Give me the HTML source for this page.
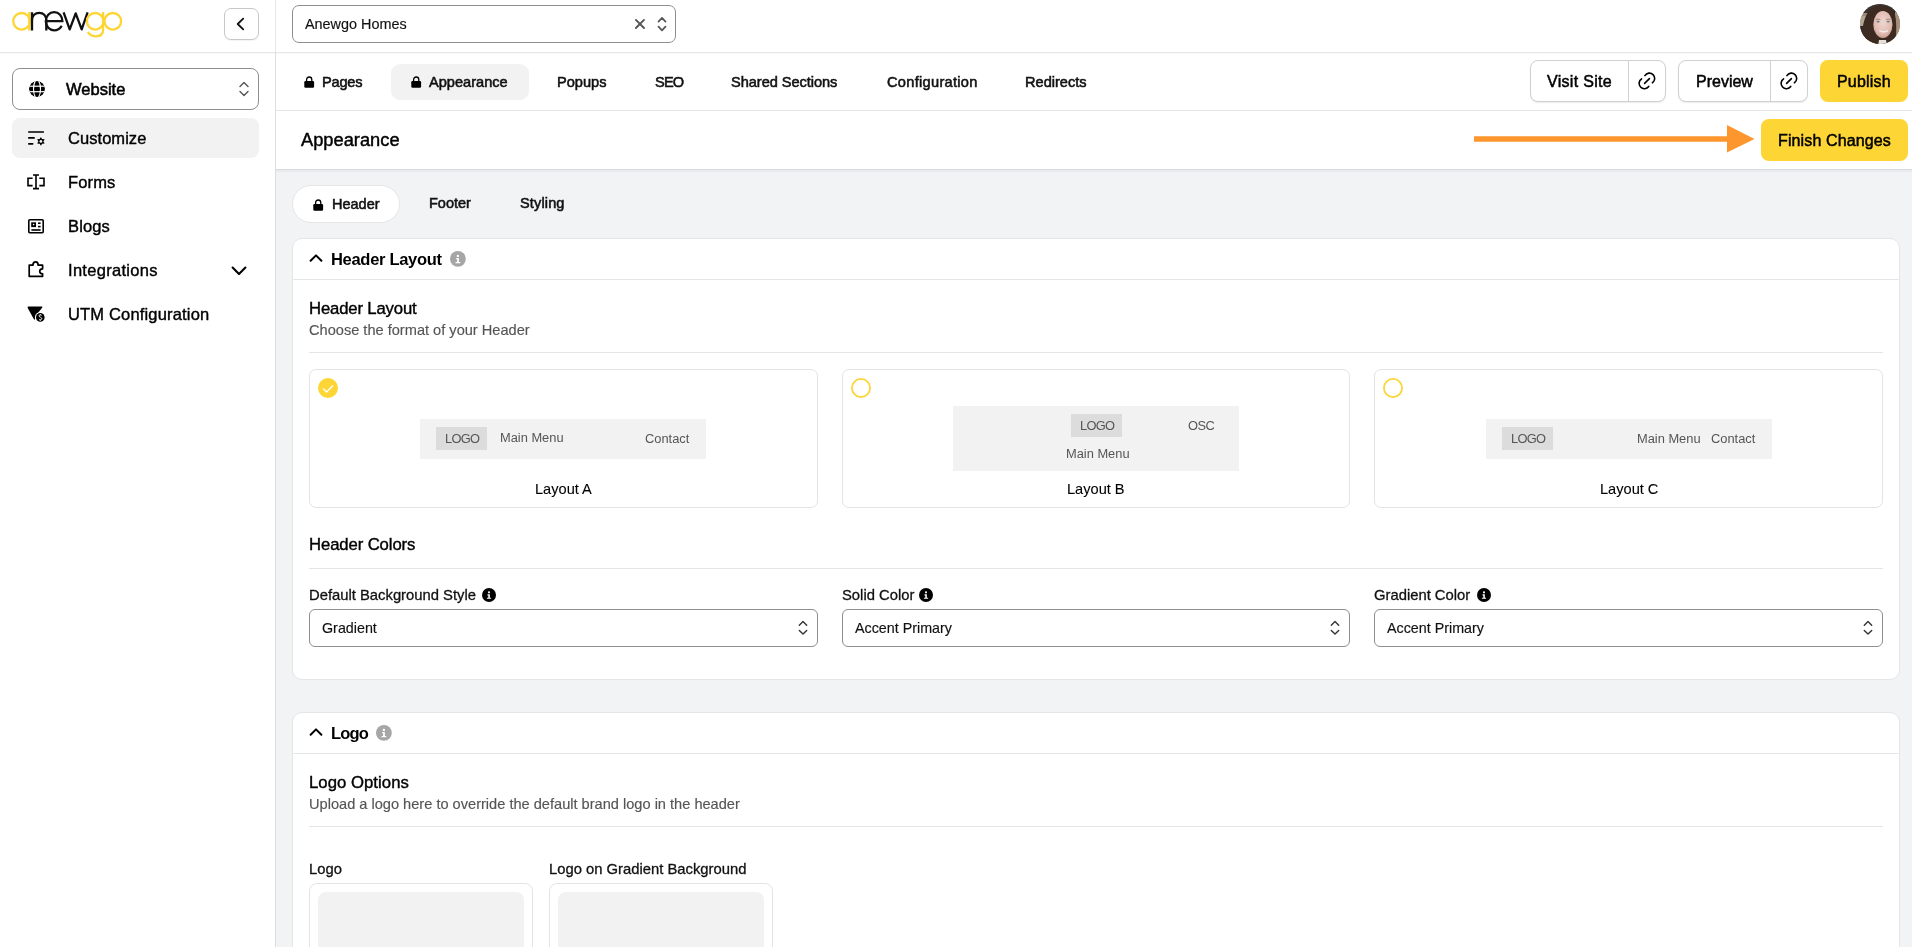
<!DOCTYPE html>
<html><head><meta charset="utf-8"><title>Appearance</title>
<style>
html,body{margin:0;padding:0;}
body{width:1912px;height:947px;overflow:hidden;position:relative;background:#fff;font-family:"Liberation Sans", sans-serif;}
.t{position:absolute;white-space:nowrap;line-height:1;will-change:transform;}
svg{display:block}
</style></head><body>
<div style="position:absolute;left:276px;top:170px;width:1636px;height:777px;box-sizing:border-box;background:#f2f3f5"></div>
<div style="position:absolute;left:276px;top:169px;width:1636px;height:1px;box-sizing:border-box;background:#dadbde"></div>
<div style="position:absolute;left:276px;top:170px;width:1636px;height:3px;box-sizing:border-box;background:linear-gradient(#e6e7ea,#f2f3f5)"></div>
<div style="position:absolute;left:0px;top:52px;width:1912px;height:1px;box-sizing:border-box;background:#e5e5e5"></div>
<div style="position:absolute;left:0px;top:53px;width:1912px;height:2px;box-sizing:border-box;background:linear-gradient(rgba(0,0,0,0.03),rgba(0,0,0,0))"></div>
<div style="position:absolute;left:276px;top:110px;width:1636px;height:1px;box-sizing:border-box;background:#e5e5e5"></div>
<div style="position:absolute;left:275px;top:0px;width:1px;height:52px;box-sizing:border-box;background:#e8e8e8"></div>
<div style="position:absolute;left:275px;top:52px;width:1px;height:895px;box-sizing:border-box;background:#dedede"></div>
<svg style="position:absolute;left:0px;top:0px;overflow:visible;" width="130" height="45" viewBox="0 0 130 45">
<g fill="none" stroke-width="2.3">
<circle cx="21.6" cy="21.3" r="8.3" stroke="#FDD535"/>
<line x1="29.3" y1="12" x2="29.3" y2="30.6" stroke="#FDD535"/>
<path d="M32 30.6 V12.2 M32 20.8 C32 15.6 35.3 12.9 39.3 12.9 C43.3 12.9 46.3 15.6 46.3 20.8 V30.6" stroke="#111"/>
<path d="M45.8 21.2 H62.4 C62.4 15.8 58.8 12.2 54.2 12.2 C49.3 12.2 45.8 16.2 45.8 21.3 C45.8 26.6 49.5 30.3 54.2 30.3 C57.5 30.3 60 28.5 61.8 25.8" stroke="#111"/>
<path d="M63.6 12.3 L69.7 29.4 L75.7 13.4 L81.7 29.4 L87.6 12.3" stroke="#111" stroke-linejoin="round"/>
<circle cx="95.2" cy="21.3" r="8.3" stroke="#FDD535"/>
<path d="M103.1 12 V30 C103.1 34.4 99.8 36.3 95.5 36.3 C92.2 36.3 89.6 34.9 87.8 32.2" stroke="#FDD535"/>
<circle cx="112.8" cy="21.3" r="8.3" stroke="#FDD535"/>
</g></svg>
<div style="position:absolute;left:224px;top:8px;width:35px;height:32px;box-sizing:border-box;border:1px solid #c8c8c8;border-radius:7px;background:#fff;box-shadow:0 1px 1px rgba(0,0,0,0.05)"></div>
<svg style="position:absolute;left:230px;top:12px;overflow:visible;" width="20" height="24" viewBox="0 0 20 24"><path d="M13.2 6.7 L7.7 12 L13.2 17.3" fill="none" stroke="#111" stroke-width="1.8" stroke-linecap="round" stroke-linejoin="round"/></svg>
<div style="position:absolute;left:12px;top:68px;width:247px;height:42px;box-sizing:border-box;border:1px solid #8e8e8e;border-radius:8px;background:#fff"></div>
<svg style="position:absolute;left:29px;top:81px;overflow:visible;" width="16" height="16" viewBox="0 0 16 16"><defs><clipPath id="gc"><circle cx="8" cy="8" r="8"/></clipPath></defs>
<g clip-path="url(#gc)"><circle cx="8" cy="8" r="8" fill="#000"/>
<rect x="-1" y="4.6" width="18" height="1.2" fill="#fff"/>
<rect x="-1" y="10.1" width="18" height="1.2" fill="#fff"/>
<path d="M6.6 -0.5 C3.8 3.5 3.8 12.5 6.6 16.5" fill="none" stroke="#fff" stroke-width="1.15"/>
<path d="M9.4 -0.5 C12.2 3.5 12.2 12.5 9.4 16.5" fill="none" stroke="#fff" stroke-width="1.15"/>
</g></svg>
<div class="t" style="left:65.8px;top:81.33px;font-size:16.5px;font-weight:400;color:#000;letter-spacing:0px;-webkit-text-stroke:0.55px #000;">Website</div>
<svg style="position:absolute;left:236px;top:80px;overflow:visible;" width="16" height="18" viewBox="0 0 16 18"><path d="M4 6.5 L8 2.5 L12 6.5 M4 11.5 L8 15.5 L12 11.5" fill="none" stroke="#555" stroke-width="1.4" stroke-linecap="round" stroke-linejoin="round"/></svg>
<div style="position:absolute;left:12px;top:118px;width:247px;height:40px;box-sizing:border-box;background:#f2f2f2;border-radius:8px"></div>
<svg style="position:absolute;left:27px;top:130px;overflow:visible;" width="20" height="20" viewBox="0 0 20 20"><g stroke="#000" stroke-width="1.7" stroke-linecap="round">
<line x1="1.85" y1="2" x2="16.25" y2="2"/><line x1="1.85" y1="7.9" x2="7.05" y2="7.9"/><line x1="1.85" y1="13.8" x2="5.65" y2="13.8"/></g>
<g transform="translate(13.9,11.4)">
<path d="M0 -4.4 L1.2 -2.3 L3.8 -2.2 L2.5 0 L3.8 2.2 L1.2 2.3 L0 4.4 L-1.2 2.3 L-3.8 2.2 L-2.5 0 L-3.8 -2.2 L-1.2 -2.3 Z" fill="#000"/>
<circle r="1.4" fill="#f2f2f2"/></g></svg>
<div class="t" style="left:68px;top:129.83px;font-size:16.5px;font-weight:400;color:#000;letter-spacing:0.05px;-webkit-text-stroke:0.4px #000;">Customize</div>
<svg style="position:absolute;left:27px;top:174px;overflow:visible;" width="18" height="16" viewBox="0 0 18 16"><g fill="none" stroke="#000" stroke-width="1.6">
<path d="M5.6 4.2 H1 V11.6 H5.6"/><path d="M12.3 4.2 H17 V11.6 H12.3"/>
<path d="M9 1 V14.6 M6 1 H12 M6 14.6 H12"/></g></svg>
<div class="t" style="left:67.5px;top:174.03px;font-size:16.5px;font-weight:400;color:#000;letter-spacing:0.15px;-webkit-text-stroke:0.4px #000;">Forms</div>
<svg style="position:absolute;left:28px;top:218.5px;overflow:visible;" width="16" height="15" viewBox="0 0 16 15"><g fill="none" stroke="#000" stroke-width="1.6">
<rect x="0.8" y="0.8" width="14.4" height="13" rx="1"/>
<line x1="3.4" y1="11" x2="12.6" y2="11"/><line x1="10" y1="4.2" x2="12.6" y2="4.2"/><line x1="10" y1="7.6" x2="12.6" y2="7.6"/></g>
<rect x="3.2" y="3.3" width="4.8" height="4.8" fill="#000"/><circle cx="5.6" cy="5.6" r="0.8" fill="#fff"/></svg>
<div class="t" style="left:67.5px;top:217.83px;font-size:16.5px;font-weight:400;color:#000;letter-spacing:0.15px;-webkit-text-stroke:0.4px #000;">Blogs</div>
<svg style="position:absolute;left:28px;top:261px;overflow:visible;" width="16" height="17" viewBox="0 0 16 17"><path d="M1.2 4.2 H4.9 C4.9 1.9 6.1 0.8 7.6 0.8 C9.1 0.8 10.2 1.9 10.2 4.2 H14.6 V7.8 C12.8 7.8 11.7 8.9 11.7 10.3 C11.7 11.7 12.8 12.8 14.6 12.8 V15.3 H1.2 Z" fill="none" stroke="#000" stroke-width="1.7" stroke-linejoin="round"/></svg>
<div class="t" style="left:67.5px;top:261.83px;font-size:16.5px;font-weight:400;color:#000;letter-spacing:0.3px;-webkit-text-stroke:0.4px #000;">Integrations</div>
<svg style="position:absolute;left:229px;top:262px;overflow:visible;" width="20" height="16" viewBox="0 0 20 16"><path d="M3.6 5.6 L10 12 L16.4 5.6" fill="none" stroke="#000" stroke-width="2.1" stroke-linecap="round" stroke-linejoin="round"/></svg>
<svg style="position:absolute;left:27px;top:306px;overflow:visible;" width="20" height="18" viewBox="0 0 20 18"><path d="M0.6 1.6 Q0.3 0.4 1.6 0.4 H14.6 Q15.9 0.4 15.3 1.6 L9.4 9 C8.6 10 8.2 11.2 8 12.6 L7.6 14 L6.6 12.8 L1 2.6 Z" fill="#000"/>
<circle cx="13.3" cy="11.4" r="5.4" fill="#fff"/><circle cx="13.3" cy="11.4" r="4.3" fill="#000"/>
<path d="M14.6 9.4 C14.2 8.8 12 8.6 12 10 C12 11.3 14.8 11 14.8 12.7 C14.8 14 12.6 14 12 13.4 M13.3 8 V8.9 M13.3 13.9 V14.8" fill="none" stroke="#fff" stroke-width="0.9"/></svg>
<div class="t" style="left:67.5px;top:305.83px;font-size:16.5px;font-weight:400;color:#000;letter-spacing:0.17px;-webkit-text-stroke:0.4px #000;">UTM Configuration</div>
<div style="position:absolute;left:292px;top:5px;width:384px;height:38px;box-sizing:border-box;border:1px solid #8e8e8e;border-radius:7px;background:#fff"></div>
<div class="t" style="left:304.5px;top:16.71px;font-size:14.4px;font-weight:400;color:#111;letter-spacing:0px;-webkit-text-stroke:0.15px #111;">Anewgo Homes</div>
<svg style="position:absolute;left:632px;top:17px;overflow:visible;" width="14" height="14" viewBox="0 0 14 14"><path d="M3.9 2.9 L12.0 11.0 M12.0 2.9 L3.9 11.0" stroke="#555" stroke-width="1.9" stroke-linecap="round"/></svg>
<svg style="position:absolute;left:654px;top:14px;overflow:visible;" width="16" height="20" viewBox="0 0 16 20"><path d="M4.5 7.6 L8 3.9 L11.5 7.6 M4.5 12.6 L8 16.3 L11.5 12.6" fill="none" stroke="#555" stroke-width="1.7" stroke-linecap="round" stroke-linejoin="round"/></svg>
<svg style="position:absolute;left:1860px;top:4px;overflow:visible;" width="40" height="40" viewBox="0 0 40 40"><defs><clipPath id="av"><circle cx="20" cy="20" r="20"/></clipPath>
<radialGradient id="sk" cx="50%" cy="42%" r="60%"><stop offset="0" stop-color="#eed6d0"/><stop offset="0.7" stop-color="#e2bcb2"/><stop offset="1" stop-color="#c99a8c"/></radialGradient></defs>
<g clip-path="url(#av)">
<rect width="40" height="40" fill="#9b8c78"/>
<rect x="0" y="0" width="40" height="9" fill="#3a3430"/>
<rect x="0" y="12" width="8" height="14" fill="#b3a792"/>
<rect x="0" y="22" width="8" height="18" fill="#2f2a28"/>
<rect x="32" y="8" width="8" height="26" fill="#a58f78"/>
<rect x="33.2" y="7" width="1.8" height="16" fill="#1e2740"/>
<path d="M2 42 C1 30 3 14 9 7 C14 1 26 0 32 5 C37 10 37 24 35 42 Z" fill="#3d2b22"/>
<ellipse cx="22.9" cy="20.5" rx="9.6" ry="13.6" fill="url(#sk)"/>
<path d="M12 12 C14 5 20 3.5 25 4 C30 4.5 33 8 33.5 13 C30 8.5 25 6.5 21 6.5 C17 6.5 14 8.5 12 12 Z" fill="#3d2b22"/>
<ellipse cx="18.1" cy="17.6" rx="1.6" ry="0.9" fill="#5d7b8f"/>
<ellipse cx="28.2" cy="17.6" rx="1.6" ry="0.9" fill="#5d7b8f"/>
<path d="M15.6 15.6 Q18 14.6 20.4 15.6 M26 15.6 Q28.3 14.6 30.6 15.6" stroke="#8a6a5e" stroke-width="0.7" fill="none"/>
<path d="M19.5 26.6 Q23.5 29 28 26.6" stroke="#f1ece8" stroke-width="1.5" fill="none"/>
<path d="M19 36 L26 36 L27 42 L18 42 Z" fill="#e6e0da"/>
</g></svg>
<svg style="position:absolute;left:304px;top:76px;overflow:visible;" width="11" height="12" viewBox="0 0 11 12"><path d="M2.6 6 V3.8 C2.6 2.1 3.8 1 5.2 1 C6.6 1 7.8 2.1 7.8 3.8 V6" fill="none" stroke="#000" stroke-width="1.3"/><rect x="0.3" y="5.1" width="9.8" height="6.6" rx="1.2" fill="#000"/></svg>
<div class="t" style="left:322px;top:74.64px;font-size:14.6px;font-weight:400;color:#111;letter-spacing:-0.2px;-webkit-text-stroke:0.55px #111;">Pages</div>
<div style="position:absolute;left:391px;top:64px;width:138px;height:36px;box-sizing:border-box;background:#f2f2f2;border-radius:9px"></div>
<svg style="position:absolute;left:411px;top:76px;overflow:visible;" width="11" height="12" viewBox="0 0 11 12"><path d="M2.6 6 V3.8 C2.6 2.1 3.8 1 5.2 1 C6.6 1 7.8 2.1 7.8 3.8 V6" fill="none" stroke="#000" stroke-width="1.3"/><rect x="0.3" y="5.1" width="9.8" height="6.6" rx="1.2" fill="#000"/></svg>
<div class="t" style="left:429.3px;top:74.64px;font-size:14.6px;font-weight:400;color:#111;letter-spacing:0px;-webkit-text-stroke:0.55px #111;">Appearance</div>
<div class="t" style="left:556.5px;top:74.64px;font-size:14.6px;font-weight:400;color:#111;letter-spacing:0px;-webkit-text-stroke:0.55px #111;">Popups</div>
<div class="t" style="left:654.8px;top:74.64px;font-size:14.6px;font-weight:400;color:#111;letter-spacing:-0.8px;-webkit-text-stroke:0.55px #111;">SEO</div>
<div class="t" style="left:730.5px;top:74.64px;font-size:14.6px;font-weight:400;color:#111;letter-spacing:-0.05px;-webkit-text-stroke:0.55px #111;">Shared Sections</div>
<div class="t" style="left:887px;top:74.64px;font-size:14.6px;font-weight:400;color:#111;letter-spacing:0.3px;-webkit-text-stroke:0.55px #111;">Configuration</div>
<div class="t" style="left:1024.5px;top:74.64px;font-size:14.6px;font-weight:400;color:#111;letter-spacing:0px;-webkit-text-stroke:0.55px #111;">Redirects</div>
<div style="position:absolute;left:1530px;top:60px;width:136px;height:42px;box-sizing:border-box;border:1px solid #d0d0d0;border-radius:8px;background:#fff;box-shadow:0 1px 1.5px rgba(0,0,0,0.08)"></div>
<div style="position:absolute;left:1628px;top:60px;width:1px;height:42px;box-sizing:border-box;background:#d0d0d0"></div>
<div class="t" style="left:1547.3px;top:74.06px;font-size:16px;font-weight:400;color:#000;letter-spacing:0.3px;-webkit-text-stroke:0.5px #000;">Visit Site</div>
<svg style="position:absolute;left:1634px;top:68px;overflow:visible;" width="26" height="26" viewBox="0 0 26 26"><g fill="none" stroke="#000" stroke-width="1.6" stroke-linecap="round"><path d="M10.9 7.6 A5.3 5.3 0 1 1 18.44 14.74"/><path d="M7.6 10.9 A5.3 5.3 0 1 0 14.74 18.44"/><line x1="10.6" y1="15.4" x2="15.4" y2="10.6"/></g></svg>
<div style="position:absolute;left:1678px;top:60px;width:130px;height:42px;box-sizing:border-box;border:1px solid #d0d0d0;border-radius:8px;background:#fff;box-shadow:0 1px 1.5px rgba(0,0,0,0.08)"></div>
<div style="position:absolute;left:1770px;top:60px;width:1px;height:42px;box-sizing:border-box;background:#d0d0d0"></div>
<div class="t" style="left:1695.5px;top:74.06px;font-size:16px;font-weight:400;color:#000;letter-spacing:0px;-webkit-text-stroke:0.5px #000;">Preview</div>
<svg style="position:absolute;left:1776px;top:68px;overflow:visible;" width="26" height="26" viewBox="0 0 26 26"><g fill="none" stroke="#000" stroke-width="1.6" stroke-linecap="round"><path d="M10.9 7.6 A5.3 5.3 0 1 1 18.44 14.74"/><path d="M7.6 10.9 A5.3 5.3 0 1 0 14.74 18.44"/><line x1="10.6" y1="15.4" x2="15.4" y2="10.6"/></g></svg>
<div style="position:absolute;left:1820px;top:60px;width:88px;height:42px;box-sizing:border-box;background:#FDD535;border-radius:8px"></div>
<div class="t" style="left:1836.8px;top:74.06px;font-size:16px;font-weight:400;color:#000;letter-spacing:0.2px;-webkit-text-stroke:0.5px #000;">Publish</div>
<div class="t" style="left:300.5px;top:131.31px;font-size:18.3px;font-weight:400;color:#000;letter-spacing:0px;-webkit-text-stroke:0.45px #000;">Appearance</div>
<svg style="position:absolute;left:1470px;top:120px;overflow:visible;" width="290" height="40" viewBox="0 0 290 40"><line x1="4" y1="19" x2="258" y2="19" stroke="#FD962D" stroke-width="5.4"/><path d="M257 5 L284.5 19 L257 32.5 Z" fill="#FD962D"/></svg>
<div style="position:absolute;left:1761px;top:119px;width:147px;height:42px;box-sizing:border-box;background:#FDD535;border-radius:8px"></div>
<div class="t" style="left:1778px;top:133.06px;font-size:16px;font-weight:400;color:#000;letter-spacing:0.13px;-webkit-text-stroke:0.5px #000;">Finish Changes</div>
<div style="position:absolute;left:292px;top:185px;width:108px;height:38px;box-sizing:border-box;background:#fff;border:1px solid #e6e6e6;border-radius:20px"></div>
<svg style="position:absolute;left:313px;top:199px;overflow:visible;" width="11" height="12" viewBox="0 0 11 12"><path d="M2.6 6 V3.8 C2.6 2.1 3.8 1 5.2 1 C6.6 1 7.8 2.1 7.8 3.8 V6" fill="none" stroke="#000" stroke-width="1.3"/><rect x="0.3" y="5.1" width="9.8" height="6.6" rx="1.2" fill="#000"/></svg>
<div class="t" style="left:331.5px;top:196.73px;font-size:14.5px;font-weight:400;color:#111;letter-spacing:0px;-webkit-text-stroke:0.55px #111;">Header</div>
<div class="t" style="left:428.8px;top:196.03px;font-size:14.5px;font-weight:400;color:#111;letter-spacing:0px;-webkit-text-stroke:0.55px #111;">Footer</div>
<div class="t" style="left:519.8px;top:196.03px;font-size:14.5px;font-weight:400;color:#111;letter-spacing:0.15px;-webkit-text-stroke:0.55px #111;">Styling</div>
<div style="position:absolute;left:292px;top:238px;width:1608px;height:442px;box-sizing:border-box;background:#fff;border:1px solid #e4e5e7;border-radius:10px"></div>
<div style="position:absolute;left:293px;top:279px;width:1606px;height:1px;box-sizing:border-box;background:#e6e6e6"></div>
<svg style="position:absolute;left:306px;top:248px;overflow:visible;" width="22" height="22" viewBox="0 0 22 22"><path d="M4.6 12.8 L10 7.4 L15.4 12.8" fill="none" stroke="#000" stroke-width="2" stroke-linecap="round" stroke-linejoin="round"/></svg>
<div class="t" style="left:331px;top:251.03px;font-size:16.5px;font-weight:700;color:#000;letter-spacing:-0.3px;">Header Layout</div>
<svg style="position:absolute;left:450.0px;top:250.99999999999997px;overflow:visible;" width="15.8" height="15.8" viewBox="0 0 15.8 15.8"><circle cx="7.9" cy="7.9" r="7.9" fill="#a6a6a6"/><circle cx="7.9" cy="4.90" r="1.19" fill="#fff"/><path d="M6.16 7.11 H8.85 V10.90 H10.27 V12.25 H5.53 V10.90 H7.11 V8.37 H6.16 Z" fill="#fff"/></svg>
<div class="t" style="left:308.5px;top:300.86px;font-size:16.7px;font-weight:400;color:#000;letter-spacing:-0.15px;-webkit-text-stroke:0.4px #000;">Header Layout</div>
<div class="t" style="left:308.8px;top:322.64px;font-size:14.6px;font-weight:400;color:#555;letter-spacing:0px;-webkit-text-stroke:0.15px #555;">Choose the format of your Header</div>
<div style="position:absolute;left:309px;top:352px;width:1574px;height:1px;box-sizing:border-box;background:#e5e5e5"></div>
<div style="position:absolute;left:309px;top:369px;width:509px;height:139px;box-sizing:border-box;border:1px solid #e3e3e3;border-radius:7px;background:#fff"></div>
<svg style="position:absolute;left:318px;top:378px;overflow:visible;" width="20" height="20" viewBox="0 0 20 20"><circle cx="10" cy="10" r="10" fill="#FDD535"/><path d="M5.2 10.5 L8.6 14 L15 7.4" fill="none" stroke="#fff" stroke-width="1.4"/></svg>
<div style="position:absolute;left:842px;top:369px;width:508px;height:139px;box-sizing:border-box;border:1px solid #e3e3e3;border-radius:7px;background:#fff"></div>
<svg style="position:absolute;left:851px;top:378px;overflow:visible;" width="20" height="20" viewBox="0 0 20 20"><circle cx="10" cy="10" r="9.1" fill="none" stroke="#FDD535" stroke-width="1.8"/></svg>
<div style="position:absolute;left:1374px;top:369px;width:509px;height:139px;box-sizing:border-box;border:1px solid #e3e3e3;border-radius:7px;background:#fff"></div>
<svg style="position:absolute;left:1383px;top:378px;overflow:visible;" width="20" height="20" viewBox="0 0 20 20"><circle cx="10" cy="10" r="9.1" fill="none" stroke="#FDD535" stroke-width="1.8"/></svg>
<div style="position:absolute;left:420px;top:419px;width:286px;height:40px;box-sizing:border-box;background:#f2f2f2"></div>
<div style="position:absolute;left:436px;top:427px;width:51px;height:23px;box-sizing:border-box;background:#dcdcdc"></div>
<div class="t" style="left:444.5px;top:432.62px;font-size:12.85px;font-weight:400;color:#555;letter-spacing:-0.7px;">LOGO</div>
<div class="t" style="left:500px;top:432.22px;font-size:12.85px;font-weight:400;color:#555;letter-spacing:0px;">Main Menu</div>
<div class="t" style="left:644.5px;top:432.62px;font-size:12.85px;font-weight:400;color:#555;letter-spacing:0px;">Contact</div>
<div class="t" style="left:535px;top:481.94px;font-size:14.6px;font-weight:400;color:#000;letter-spacing:0px;-webkit-text-stroke:0.1px #000;">Layout A</div>
<div style="position:absolute;left:953px;top:406px;width:286px;height:65px;box-sizing:border-box;background:#f2f2f2"></div>
<div style="position:absolute;left:1071px;top:414px;width:51px;height:23px;box-sizing:border-box;background:#dcdcdc"></div>
<div class="t" style="left:1079.5px;top:420.12px;font-size:12.85px;font-weight:400;color:#555;letter-spacing:-0.7px;">LOGO</div>
<div class="t" style="left:1187.5px;top:420.12px;font-size:12.85px;font-weight:400;color:#555;letter-spacing:-0.5px;">OSC</div>
<div class="t" style="left:1065.5px;top:448.02px;font-size:12.85px;font-weight:400;color:#555;letter-spacing:0px;">Main Menu</div>
<div class="t" style="left:1067px;top:481.54px;font-size:14.6px;font-weight:400;color:#000;letter-spacing:0px;-webkit-text-stroke:0.1px #000;">Layout B</div>
<div style="position:absolute;left:1486px;top:419px;width:286px;height:40px;box-sizing:border-box;background:#f2f2f2"></div>
<div style="position:absolute;left:1502px;top:427px;width:51px;height:23px;box-sizing:border-box;background:#dcdcdc"></div>
<div class="t" style="left:1510.5px;top:432.62px;font-size:12.85px;font-weight:400;color:#555;letter-spacing:-0.7px;">LOGO</div>
<div class="t" style="left:1637px;top:432.62px;font-size:12.85px;font-weight:400;color:#555;letter-spacing:0px;">Main Menu</div>
<div class="t" style="left:1710.5px;top:432.62px;font-size:12.85px;font-weight:400;color:#555;letter-spacing:0px;">Contact</div>
<div class="t" style="left:1599.5px;top:481.94px;font-size:14.6px;font-weight:400;color:#000;letter-spacing:0px;-webkit-text-stroke:0.1px #000;">Layout C</div>
<div class="t" style="left:308.5px;top:536.66px;font-size:16.7px;font-weight:400;color:#000;letter-spacing:-0.1px;-webkit-text-stroke:0.4px #000;">Header Colors</div>
<div style="position:absolute;left:309px;top:568px;width:1574px;height:1px;box-sizing:border-box;background:#e5e5e5"></div>
<div class="t" style="left:308.7px;top:588.17px;font-size:14.8px;font-weight:400;color:#111;letter-spacing:0px;-webkit-text-stroke:0.3px #111;">Default Background Style</div>
<svg style="position:absolute;left:482px;top:587.9px;overflow:visible;" width="14" height="14" viewBox="0 0 14 14"><circle cx="7" cy="7" r="7" fill="#000"/><circle cx="7" cy="4.34" r="1.05" fill="#fff"/><path d="M5.46 6.30 H7.84 V9.66 H9.10 V10.85 H4.90 V9.66 H6.30 V7.42 H5.46 Z" fill="#fff"/></svg>
<div style="position:absolute;left:309px;top:609px;width:509px;height:38px;box-sizing:border-box;border:1px solid #8e8e8e;border-radius:6px;background:#fff"></div>
<div class="t" style="left:321.7px;top:620.70px;font-size:14.3px;font-weight:400;color:#111;letter-spacing:0px;-webkit-text-stroke:0.15px #111;">Gradient</div>
<svg style="position:absolute;left:795px;top:618px;overflow:visible;" width="16" height="20" viewBox="0 0 16 20"><path d="M4.3 7.2 L8 3.6 L11.7 7.2 M4.3 12.4 L8 16 L11.7 12.4" fill="none" stroke="#333" stroke-width="1.4" stroke-linecap="round" stroke-linejoin="round"/></svg>
<div class="t" style="left:841.7px;top:588.17px;font-size:14.8px;font-weight:400;color:#111;letter-spacing:0px;-webkit-text-stroke:0.3px #111;">Solid Color</div>
<svg style="position:absolute;left:919px;top:587.9px;overflow:visible;" width="14" height="14" viewBox="0 0 14 14"><circle cx="7" cy="7" r="7" fill="#000"/><circle cx="7" cy="4.34" r="1.05" fill="#fff"/><path d="M5.46 6.30 H7.84 V9.66 H9.10 V10.85 H4.90 V9.66 H6.30 V7.42 H5.46 Z" fill="#fff"/></svg>
<div style="position:absolute;left:842px;top:609px;width:508px;height:38px;box-sizing:border-box;border:1px solid #8e8e8e;border-radius:6px;background:#fff"></div>
<div class="t" style="left:854.7px;top:620.70px;font-size:14.3px;font-weight:400;color:#111;letter-spacing:0px;-webkit-text-stroke:0.15px #111;">Accent Primary</div>
<svg style="position:absolute;left:1327px;top:618px;overflow:visible;" width="16" height="20" viewBox="0 0 16 20"><path d="M4.3 7.2 L8 3.6 L11.7 7.2 M4.3 12.4 L8 16 L11.7 12.4" fill="none" stroke="#333" stroke-width="1.4" stroke-linecap="round" stroke-linejoin="round"/></svg>
<div class="t" style="left:1373.7px;top:588.17px;font-size:14.8px;font-weight:400;color:#111;letter-spacing:0px;-webkit-text-stroke:0.3px #111;">Gradient Color</div>
<svg style="position:absolute;left:1476.5px;top:587.9px;overflow:visible;" width="14" height="14" viewBox="0 0 14 14"><circle cx="7" cy="7" r="7" fill="#000"/><circle cx="7" cy="4.34" r="1.05" fill="#fff"/><path d="M5.46 6.30 H7.84 V9.66 H9.10 V10.85 H4.90 V9.66 H6.30 V7.42 H5.46 Z" fill="#fff"/></svg>
<div style="position:absolute;left:1374px;top:609px;width:509px;height:38px;box-sizing:border-box;border:1px solid #8e8e8e;border-radius:6px;background:#fff"></div>
<div class="t" style="left:1386.7px;top:620.70px;font-size:14.3px;font-weight:400;color:#111;letter-spacing:0px;-webkit-text-stroke:0.15px #111;">Accent Primary</div>
<svg style="position:absolute;left:1860px;top:618px;overflow:visible;" width="16" height="20" viewBox="0 0 16 20"><path d="M4.3 7.2 L8 3.6 L11.7 7.2 M4.3 12.4 L8 16 L11.7 12.4" fill="none" stroke="#333" stroke-width="1.4" stroke-linecap="round" stroke-linejoin="round"/></svg>
<div style="position:absolute;left:292px;top:712px;width:1608px;height:248px;box-sizing:border-box;background:#fff;border:1px solid #e4e5e7;border-radius:10px"></div>
<div style="position:absolute;left:293px;top:753px;width:1606px;height:1px;box-sizing:border-box;background:#e6e6e6"></div>
<svg style="position:absolute;left:306px;top:722px;overflow:visible;" width="22" height="22" viewBox="0 0 22 22"><path d="M4.6 12.8 L10 7.4 L15.4 12.8" fill="none" stroke="#000" stroke-width="2" stroke-linecap="round" stroke-linejoin="round"/></svg>
<div class="t" style="left:331px;top:724.83px;font-size:16.5px;font-weight:700;color:#000;letter-spacing:-0.8px;">Logo</div>
<svg style="position:absolute;left:376.1px;top:725.0px;overflow:visible;" width="15.8" height="15.8" viewBox="0 0 15.8 15.8"><circle cx="7.9" cy="7.9" r="7.9" fill="#a6a6a6"/><circle cx="7.9" cy="4.90" r="1.19" fill="#fff"/><path d="M6.16 7.11 H8.85 V10.90 H10.27 V12.25 H5.53 V10.90 H7.11 V8.37 H6.16 Z" fill="#fff"/></svg>
<div class="t" style="left:308.5px;top:774.66px;font-size:16.7px;font-weight:400;color:#000;letter-spacing:0.05px;-webkit-text-stroke:0.4px #000;">Logo Options</div>
<div class="t" style="left:308.8px;top:796.84px;font-size:14.6px;font-weight:400;color:#555;letter-spacing:0px;-webkit-text-stroke:0.15px #555;">Upload a logo here to override the default brand logo in the header</div>
<div style="position:absolute;left:309px;top:826px;width:1574px;height:1px;box-sizing:border-box;background:#e5e5e5"></div>
<div class="t" style="left:308.5px;top:861.97px;font-size:14.8px;font-weight:400;color:#111;letter-spacing:0px;-webkit-text-stroke:0.3px #111;">Logo</div>
<div class="t" style="left:548.5px;top:861.97px;font-size:14.8px;font-weight:400;color:#111;letter-spacing:0px;-webkit-text-stroke:0.3px #111;">Logo on Gradient Background</div>
<div style="position:absolute;left:309px;top:883px;width:224px;height:117px;box-sizing:border-box;border:1px solid #e3e3e3;border-radius:8px;background:#fff"></div>
<div style="position:absolute;left:318px;top:892px;width:206px;height:108px;box-sizing:border-box;background:#f2f2f2;border-radius:8px"></div>
<div style="position:absolute;left:549px;top:883px;width:224px;height:117px;box-sizing:border-box;border:1px solid #e3e3e3;border-radius:8px;background:#fff"></div>
<div style="position:absolute;left:558px;top:892px;width:206px;height:108px;box-sizing:border-box;background:#f2f2f2;border-radius:8px"></div>
</body></html>
